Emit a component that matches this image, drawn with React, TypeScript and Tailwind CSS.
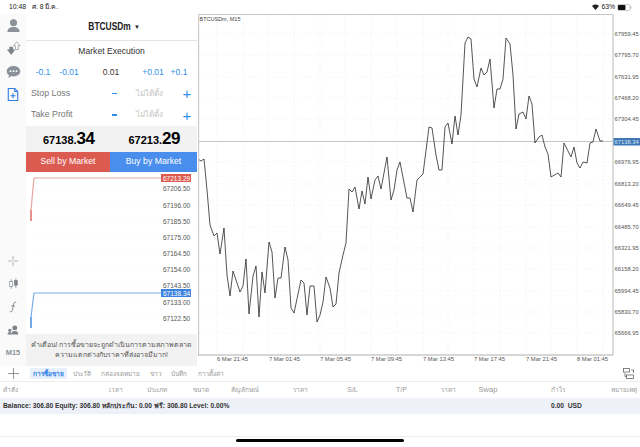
import React from 'react';

const THAI = "font-['Liberation_Sans','Noto_Sans','DejaVu_Sans',sans-serif]";

const line: [number, number][] = [
  [198, 159], [201, 161], [204, 159], [207, 190], [210, 225], [214, 236], [217, 233], [220, 254], [224, 228],
  [227, 275], [230, 296], [233, 271], [237, 283], [240, 292], [243, 286], [246, 259], [249, 314], [253, 276],
  [256, 266], [259, 317], [262, 272], [265, 293], [269, 242], [272, 252], [275, 298], [278, 278], [281, 278],
  [285, 247], [288, 260], [291, 308], [294, 313], [301, 280], [304, 283], [307, 315], [310, 286], [314, 286],
  [317, 322], [320, 315], [323, 302], [326, 277], [330, 288], [333, 307], [336, 304], [339, 273], [343, 255],
  [346, 243], [349, 189], [352, 192], [355, 187], [359, 209], [362, 191], [365, 204], [368, 177], [371, 199],
  [375, 180], [378, 176], [381, 189], [387, 157], [391, 200], [394, 190], [397, 170], [400, 162], [407, 198],
  [410, 198], [413, 212], [417, 180], [420, 177], [423, 174], [429, 127], [432, 128], [436, 155], [439, 170],
  [442, 170], [445, 127], [448, 123], [452, 144], [455, 116], [458, 135], [461, 115], [465, 43], [468, 37],
  [471, 39], [474, 79], [477, 87], [481, 68], [484, 75], [487, 72], [490, 59], [494, 108], [497, 89], [500, 89],
  [503, 79], [506, 38], [510, 44], [513, 75], [516, 129], [519, 114], [523, 112], [526, 119], [529, 96],
  [532, 104], [535, 143], [539, 137], [542, 135], [545, 147], [548, 154], [551, 177], [558, 173], [561, 177],
  [564, 143], [571, 157], [574, 147], [577, 163], [580, 168], [583, 162], [587, 163], [590, 143], [593, 142],
  [596, 129], [600, 141], [603, 141],
];

const priceLabels: [number, string][] = [
  [34, '67959.45'], [55, '67795.70'], [77, '67631.95'], [98, '67468.20'], [119, '67304.45'], [162, '66976.95'],
  [184, '66813.20'], [205, '66649.45'], [227, '66485.70'], [248, '66321.95'], [269, '66158.20'], [291, '65994.45'],
  [312, '65830.70'], [333, '65666.95'],
];

const timeLabels: [number, string][] = [
  [217, '6 Mar 21:45'], [269, '7 Mar 01:45'], [320, '7 Mar 05:45'], [371, '7 Mar 09:45'], [423, '7 Mar 13:45'],
  [474, '7 Mar 17:45'], [526, '7 Mar 21:45'], [577, '8 Mar 01:45'],
];

const gridX = [217, 243, 268, 294, 320, 345, 371, 397, 423, 448, 474, 500, 526, 551, 577, 603];

const miniLabels: [number, string][] = [
  [188, '67206.50'], [205, '67196.00'], [221, '67185.50'], [237, '67175.00'], [253, '67164.50'], [269, '67154.00'],
  [285, '67143.50'], [302, '67133.00'], [318, '67122.50'],
];

const RailIcon: React.FC<{ children: React.ReactNode }> = ({ children }) => (
  <div className="h-[23px] w-full flex items-center justify-center">{children}</div>
);

const Rail = () => (
  <div className="w-[26px] shrink-0 bg-[#fafafa] flex flex-col justify-between items-center">
    <div className="w-full">
      <RailIcon>
        <svg width="15" height="15" viewBox="0 0 16 16" fill="#8b9299">
          <circle cx="8" cy="5" r="3.8" />
          <path d="M1.500 15c0-3.600 2.600-5.300 6.500-5.300s6.500 1.700 6.500 5.300z" />
        </svg>
      </RailIcon>
      <RailIcon>
        <svg width="15" height="15" viewBox="0 0 16 16">
          <path d="M1 9h2.500V6h4v3H10l-4.500 6z" fill="#7d848b" />
          <path d="M11.500 1l3.500 4h-2v4h-3V5H8z" fill="#fff" stroke="#8b9299" strokeWidth="0.8" />
        </svg>
      </RailIcon>
      <RailIcon>
        <svg width="15" height="14" viewBox="0 0 16 15" fill="#8b9299">
          <path d="M8 1c4 0 7.300 2.400 7.300 5.600S12 12.200 8 12.200c-.8 0-1.500-.1-2.200-.3L2.500 14l.7-3.200C1.600 9.800.7 8.300.7 6.600.7 3.400 4 1 8 1z" />
          <circle cx="4.800" cy="6.600" r="1" fill="#fff" />
          <circle cx="8" cy="6.600" r="1" fill="#fff" />
          <circle cx="11.200" cy="6.600" r="1" fill="#fff" />
        </svg>
      </RailIcon>
      <RailIcon>
        <svg width="12" height="15" viewBox="0 0 14 16" fill="none" stroke="#2f7fe6" strokeWidth="1.300">
          <path d="M1.500 1h7.500l3.500 3.500V15h-11z" />
          <path d="M9 1v3.500h3.500M7 6.500v6M4 9.500h6" />
        </svg>
      </RailIcon>
    </div>
    <div className="w-full pb-[2px]">
      <RailIcon>
        <svg width="12" height="12" viewBox="0 0 14 14" stroke="#9aa0a6" strokeWidth="0.9">
          <path d="M7 1v5M7 8v5M1 7h5M8 7h5" />
        </svg>
      </RailIcon>
      <RailIcon>
        <svg width="11" height="12" viewBox="0 0 14 14" stroke="#7d848b" strokeWidth="0.9">
          <path d="M4 1v12M10 0v12" />
          <rect x="2.200" y="4" width="3.600" height="6" fill="#fff" />
          <rect x="8.200" y="2.500" width="3.600" height="6" fill="#7d848b" />
        </svg>
      </RailIcon>
      <RailIcon>
        <svg width="8" height="12" viewBox="0 0 10 14" fill="none" stroke="#777e85" strokeWidth="1.100">
          <path d="M9 1.300C6.800.3 6 1.600 5.600 4L4.400 10.500C4 12.800 2.800 13.500 1 12.700M2.800 5.600h4.600" />
        </svg>
      </RailIcon>
      <RailIcon>
        <svg width="12" height="12" viewBox="0 0 17 15" fill="#7d848b">
          <circle cx="11" cy="4.500" r="3.500" />
          <path d="M6 14c0-3.500 2-5 5-5s5 1.500 5 5z" />
          <circle cx="4" cy="8" r="2.300" />
          <path d="M.8 14c0-2.500 1.200-3.800 3.200-3.800S6 11 6 14z" />
        </svg>
      </RailIcon>
      <div className="h-[23px] flex items-center justify-center text-[7.500px] font-bold text-[#8d9399] font-['Liberation_Sans',sans-serif]">
        M15
      </div>
    </div>
  </div>
);

const Stepper: React.FC<{ label: string; className: string }> = ({ label, className }) => (
  <div className={`flex items-center pl-[5px] ${className}`}>
    <span className="w-[79px] text-[8.800px] text-[#777]">{label}</span>
    <span className="w-[8px] flex justify-center">
      <span className="w-[5px] h-[1.500px] bg-[#2f8fe8]" />
    </span>
    <span className={`w-[62px] text-center text-[8px] text-[#c4c4c4] ${THAI}`}>ไม่ได้ตั้ง</span>
    <span className="w-[14px] text-center text-[15px] leading-none text-[#2f8fe8]">+</span>
  </div>
);

const Price: React.FC<{ big: string; small: string }> = ({ big, small }) => (
  <div className="flex-1 flex items-baseline justify-center font-bold text-black">
    <span className="text-[11px]">{big}</span>
    <span className="text-[17px] tracking-[-0.5px]">{small}</span>
  </div>
);

const MiniChart = () => (
  <div className="h-[162px] bg-white relative">
    <svg width="171" height="162" viewBox="26 172 171 162" className="block font-['Liberation_Sans',sans-serif]">
      {miniLabels.map(([y]) => (
        <line key={y} x1="32" x2="160" y1={y} y2={y} stroke="#ececec" strokeWidth="0.7" strokeDasharray="1 3" />
      ))}
      <polyline points="31,221 31,210 34,178 161,178" fill="none" stroke="#e6a59d" strokeWidth="1.200" />
      <path d="M31 221V210" stroke="#dc5b50" strokeWidth="1" />
      <polyline points="31,328 31,317 34,293 161,293" fill="none" stroke="#7aaeea" strokeWidth="1.200" />
      <path d="M31 328V317" stroke="#3c83e0" strokeWidth="1" />
      {miniLabels.map(([y, t]) => (
        <text key={t} x="163" y={y + 2.500} fontSize="6.500" fill="#555">{t}</text>
      ))}
      <rect x="161" y="174" width="30" height="8" fill="#dc5b50" />
      <text x="163" y="180.500" fontSize="6.500" fill="#fff">67213.29</text>
      <rect x="161" y="289" width="30" height="8" fill="#3c83e0" />
      <text x="163" y="295.500" fontSize="6.500" fill="#fff">67138.34</text>
    </svg>
  </div>
);

const OrderPanel = () => (
  <div className="w-[171px] shrink-0 flex flex-col bg-white font-['Liberation_Sans',sans-serif]">
    <div className="h-[27px] border-b border-[#e4e4e4] flex items-center justify-center text-[10.500px] font-bold text-[#222]">
      <span className="inline-block scale-x-[0.8] whitespace-nowrap">BTCUSDm</span>
      <span className="text-[6px] -ml-[2px]">▼</span>
    </div>
    <div className="h-[21px] flex items-center justify-center text-[8.600px] text-[#333]">Market Execution</div>
    <div className="h-[21px] flex items-center pl-[4px] text-[8.500px] text-[#2f8fe8]">
      <span className="w-[26px] text-center">-0.1</span>
      <span className="w-[26px] text-center">-0.01</span>
      <span className="w-[58px] text-center text-[#333]">0.01</span>
      <span className="w-[26px] text-center">+0.01</span>
      <span className="w-[26px] text-center">+0.1</span>
    </div>
    <Stepper label="Stop Loss" className="h-[21px]" />
    <Stepper label="Take Profit" className="h-[22px]" />
    <div className="h-[26px] bg-[#f2f2f2] flex">
      <Price big="67138." small="34" />
      <Price big="67213." small="29" />
    </div>
    <div className="h-[20px] flex text-[8.700px] text-white">
      <div className="w-[84px] bg-[#dc5b50] flex items-center justify-center">Sell by Market</div>
      <div className="flex-1 bg-[#4a8eed] flex items-center justify-center">Buy by Market</div>
    </div>
    <MiniChart />
    <div className={`flex-1 bg-[#f2f2f2] flex flex-col items-center justify-center whitespace-nowrap text-[7px] leading-[10px] text-[#555] ${THAI}`}>
      <span>คำเตือน! การซื้อขายจะถูกดำเนินการตามสภาพตลาด</span>
      <span>ความแตกต่างกับราคาที่ส่งอาจมีมาก!</span>
    </div>
  </div>
);

const Chart = () => (
  <div className="flex-1 pl-[1px] bg-white">
    <svg width="442" height="352" viewBox="198 14 442 352" className="block font-['Liberation_Sans',sans-serif]">
      {gridX.map((x) => (
        <line key={x} x1={x} x2={x} y1="15" y2="354" stroke="#e6e6e6" strokeWidth="0.7" strokeDasharray="1 2.500" />
      ))}
      {priceLabels.map(([y]) => (
        <line key={y} x1="199" x2="612" y1={y} y2={y} stroke="#e6e6e6" strokeWidth="0.7" strokeDasharray="1 2.500" />
      ))}
      <line x1="199" x2="613" y1="141.500" y2="141.500" stroke="#b5b5b5" strokeWidth="0.8" />
      <polyline points={line.map((p) => p.join(',')).join(' ')} fill="none" stroke="#2a2a2a" strokeWidth="0.8" />
      <path d="M198.500 14.500H613" stroke="#c6c6c6" strokeWidth="1" fill="none" />
      <path d="M198.500 14V355" stroke="#cdcdcd" strokeWidth="1.400" fill="none" />
      <path d="M613 14V355" stroke="#cdcdcd" strokeWidth="1.400" fill="none" />
      <path d="M198 355H613" stroke="#9a9a9a" strokeWidth="0.8" fill="none" />
      <text x="199.500" y="20.500" fontSize="5.500" fill="#444">BTCUSDm, M15</text>
      {priceLabels.map(([y, t]) => (
        <text key={t} x="614.500" y={y + 2} fontSize="5.800" fill="#555">{t}</text>
      ))}
      <rect x="613.500" y="138" width="26.500" height="7.500" fill="#3f78b5" />
      <text x="614.500" y="143.500" fontSize="5.800" fill="#d8e6f5">67138.34</text>
      {timeLabels.map(([x, t]) => (
        <text key={t} x={x} y="360.500" fontSize="5.800" fill="#555">{t}</text>
      ))}
    </svg>
  </div>
);

const Tabs = () => (
  <div className={`h-[16px] border-b border-[#ececec] flex items-center whitespace-nowrap text-[6.500px] text-[#999] ${THAI}`}>
    <div className="w-[30px] flex justify-center pr-[4px]">
      <svg width="11" height="11" viewBox="0 0 11 11" stroke="#777" strokeWidth="0.8">
        <path d="M5.500 0v11M0 5.500h11" />
      </svg>
    </div>
    <span className="w-[37px] h-[11px] bg-[#e8f1fb] text-[#2f80e8] font-bold flex items-center justify-center">การซื้อขาย</span>
    <span className="w-[18px] ml-[6px] text-center">ประวัติ</span>
    <span className="w-[41px] ml-[9px] text-center">กล่องจดหมาย</span>
    <span className="w-[11px] ml-[9px] text-center">ข่าว</span>
    <span className="w-[18px] ml-[9px] text-center">บันทึก</span>
    <span className="w-[27px] ml-[9px] text-center">การตั้งค่า</span>
    <div className="ml-auto pr-[6px]">
      <svg width="11" height="11" viewBox="0 0 11 11" fill="none" stroke="#666" strokeWidth="0.8">
        <rect x="0.500" y="0.500" width="6" height="3.500" />
        <rect x="3.500" y="7" width="7" height="3.500" />
        <path d="M8 2h2.500v3M2 5v3.500h1.500" />
      </svg>
    </div>
  </div>
);

const Columns = () => (
  <div className={`h-[16px] flex items-center whitespace-nowrap text-[6.500px] text-[#999] ${THAI}`}>
    <span className="w-[97px] pl-[3px]">คำสั่ง</span>
    <span className="w-[38px] text-center">เวลา</span>
    <span className="w-[44px] text-center">ประเภท</span>
    <span className="w-[44px] text-center">ขนาด</span>
    <span className="w-[44px] text-center">สัญลักษณ์</span>
    <span className="w-[66px] text-center">ราคา</span>
    <span className="w-[39px] text-center text-[7px]">S/L</span>
    <span className="w-[59px] text-center text-[7px]">T/P</span>
    <span className="w-[35px] text-center">ราคา</span>
    <span className="w-[44px] text-center text-[7.500px]">Swap</span>
    <span className="w-[96px] text-center">กำไร</span>
    <span className="flex-1 text-right pr-[3px]">หมายเหตุ</span>
  </div>
);

const App = () => (
  <div className="w-[640px] h-[447px] bg-white overflow-hidden flex flex-col font-['Liberation_Sans',sans-serif]">
    <div className="h-[14px] shrink-0 flex items-center justify-between pl-[9px] pr-[8px] text-[6.800px] text-[#222]">
      <div className={`flex gap-[6px] ${THAI}`}>
        <span>10:48</span>
        <span>ศ. 8 มี.ค.</span>
      </div>
      <div className="flex items-center gap-[2px]">
        <svg width="7" height="6" viewBox="0 0 7 6" fill="#222">
          <path d="M0 2a5 5 0 0 1 7 0L3.500 6z" />
        </svg>
        <span>63%</span>
        <svg width="15" height="7" viewBox="0 0 15 7">
          <rect x="0.500" y="0.500" width="12.500" height="6" rx="1.500" fill="#fff" stroke="#aaa" strokeWidth="0.6" />
          <rect x="1" y="1" width="7.500" height="5" rx="1" fill="#111" />
          <path d="M13.800 2.500v2" stroke="#aaa" />
        </svg>
      </div>
    </div>
    <div className="h-[352px] shrink-0 flex">
      <Rail />
      <OrderPanel />
      <Chart />
    </div>
    <Tabs />
    <Columns />
    <div className="h-[16px] bg-[#eef2f8] flex items-center pl-[3px] text-[6.700px] font-bold text-[#333]">
      <span className={`w-[548px] ${THAI}`}>Balance: 306.80 Equity: 306.80 หลักประกัน: 0.00 ฟรี: 306.80 Level: 0.00%</span>
      <span>0.00&nbsp; USD</span>
    </div>
    <div className="h-[23px] border-b border-[#efefef]" />
    <div className="flex-1 flex justify-center pt-[2px]">
      <div className="w-[168px] h-[3px] rounded-full bg-black" />
    </div>
  </div>
);

export default App;
